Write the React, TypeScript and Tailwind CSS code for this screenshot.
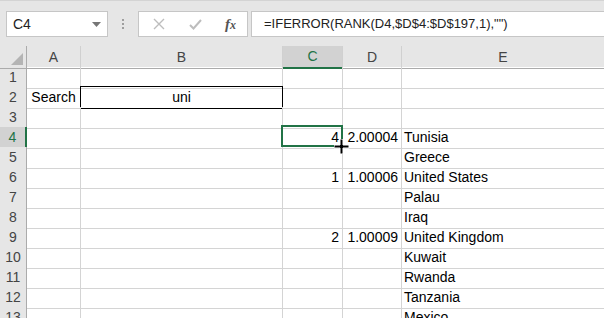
import React from "react";

const GREEN = "#217346";

type Row = { n: number; a?: string; b?: string; c?: string; d?: string; e?: string };

const rows: Row[] = [
  { n: 1 },
  { n: 2, a: "Search", b: "uni" },
  { n: 3 },
  { n: 4, c: "4", d: "2.00004", e: "Tunisia" },
  { n: 5, e: "Greece" },
  { n: 6, c: "1", d: "1.00006", e: "United States" },
  { n: 7, e: "Palau" },
  { n: 8, e: "Iraq" },
  { n: 9, c: "2", d: "1.00009", e: "United Kingdom" },
  { n: 10, e: "Kuwait" },
  { n: 11, e: "Rwanda" },
  { n: 12, e: "Tanzania" },
  { n: 13, e: "Mexico" },
];

const cols = "grid grid-cols-[27px_54px_202px_60px_59px_1fr]";

export default function App() {
  return (
    <div
      className="w-[604px] h-[318px] overflow-hidden bg-white relative text-black"
      style={{ fontFamily: '"Liberation Sans", Arial, sans-serif' }}
    >
      {/* Formula bar */}
      <div className="h-[46px] bg-[#e6e6e6] border-t border-[#d4d4d4] flex items-start pt-[10px] pl-[6px]">
        <div className="w-[102px] h-[26px] bg-white border border-[#c6c6c6] flex items-center justify-between pl-[6px] pr-[6px]">
          <span className="text-[14px] text-[#222]">C4</span>
          <svg width="9" height="5" viewBox="0 0 9 5">
            <path d="M0 0 L9 0 L4.5 5 Z" fill="#767676" />
          </svg>
        </div>
        <div className="w-[30px] h-[26px] flex flex-col items-center justify-center gap-[2px]">
          <div className="w-[2px] h-[2px] bg-[#9e9e9e]" />
          <div className="w-[2px] h-[2px] bg-[#9e9e9e]" />
          <div className="w-[2px] h-[2px] bg-[#9e9e9e]" />
        </div>
        <div className="w-[110px] h-[26px] bg-white border border-[#c6c6c6] flex items-center">
          <svg className="ml-[14px]" width="12" height="12" viewBox="0 0 12 12">
            <path d="M1 1 L11 11 M11 1 L1 11" stroke="#bdbdbd" strokeWidth="1.4" fill="none" />
          </svg>
          <svg className="ml-[24px]" width="13" height="11" viewBox="0 0 13 11">
            <path d="M1 6 L4.5 9.5 L12 1" stroke="#bdbdbd" strokeWidth="2" fill="none" />
          </svg>
          <span
            className="ml-[23px] text-[15px] italic text-[#555] font-bold"
            style={{ fontFamily: '"Liberation Serif", "Times New Roman", serif' }}
          >
            f<span className="text-[12px]">x</span>
          </span>
        </div>
        <div className="ml-[3px] flex-1 h-[26px] bg-white border border-[#c6c6c6] border-r-0 flex items-center pl-[12px]">
          <span className="text-[13px] text-[#222] whitespace-nowrap">=IFERROR(RANK(D4,$D$4:$D$197,1),"")</span>
        </div>
      </div>

      {/* Column headers */}
      <div className={`${cols} h-[21px] bg-[#e6e6e6] text-[14px] text-[#444]`}>
        <div className="border-r border-b border-[#ababab] relative">
          <svg className="absolute right-[3px] bottom-[3px]" width="12" height="12" viewBox="0 0 12 12">
            <path d="M12 0 L12 12 L0 12 Z" fill="#b4b4b4" />
          </svg>
        </div>
        <div className="border-r border-b border-[#ababab] border-r-[#d0d0d0] flex items-center justify-center">A</div>
        <div className="border-r border-b border-[#ababab] border-r-[#d0d0d0] flex items-center justify-center">B</div>
        <div className="border-r border-b-2 border-r-[#d0d0d0] border-b-[#217346] bg-[#d2d2d2] flex items-center justify-center text-[#217346]">C</div>
        <div className="border-r border-b border-[#ababab] border-r-[#d0d0d0] flex items-center justify-center">D</div>
        <div className="border-b border-[#ababab] flex items-center justify-center">E</div>
      </div>

      {/* Rows */}
      {rows.map((r) => {
        const sel = r.n === 4;
        return (
          <div key={r.n} className={`${cols} h-[20px] text-[14px]`}>
            <div
              className={
                sel
                  ? "bg-[#d2d2d2] border-r-2 border-r-[#217346] border-b border-b-[#ababab] flex items-center justify-center text-[#217346]"
                  : "bg-[#e6e6e6] border-r border-b border-[#ababab] border-b-[#d0d0d0] flex items-center justify-center text-[#444]"
              }
            >
              {r.n}
            </div>
            <div className="border-r border-b border-[#d4d4d4] flex items-center justify-center">{r.a}</div>
            <div
              className={
                r.n === 2
                  ? "border border-black -mt-px -ml-px flex items-center justify-center"
                  : "border-r border-b border-[#d4d4d4] flex items-center justify-center"
              }
            >
              {r.b}
            </div>
            <div className="border-r border-b border-[#d4d4d4] flex items-center justify-end pr-[3px]">{r.c}</div>
            <div className="border-r border-b border-[#d4d4d4] flex items-center justify-end pr-[3px]">{r.d}</div>
            <div className="border-b border-[#d4d4d4] flex items-center pl-[2px] whitespace-nowrap">{r.e}</div>
          </div>
        );
      })}

      {/* Selection box on C4 */}
      <div
        className="absolute left-[281px] top-[125px] w-[62px] h-[22px] border-2 pointer-events-none"
        style={{ borderColor: GREEN }}
      />
      <div className="absolute left-[339px] top-[143px] w-[5px] h-[5px] bg-[#217346] border border-white" />
      {/* Cursor */}
      <svg className="absolute left-[334px] top-[139px]" width="15" height="15" viewBox="0 0 15 15">
        <path d="M6 0 H9 V6 H15 V9 H9 V15 H6 V9 H0 V6 H6 Z" fill="#000" stroke="#fff" strokeWidth="1" />
      </svg>
    </div>
  );
}
